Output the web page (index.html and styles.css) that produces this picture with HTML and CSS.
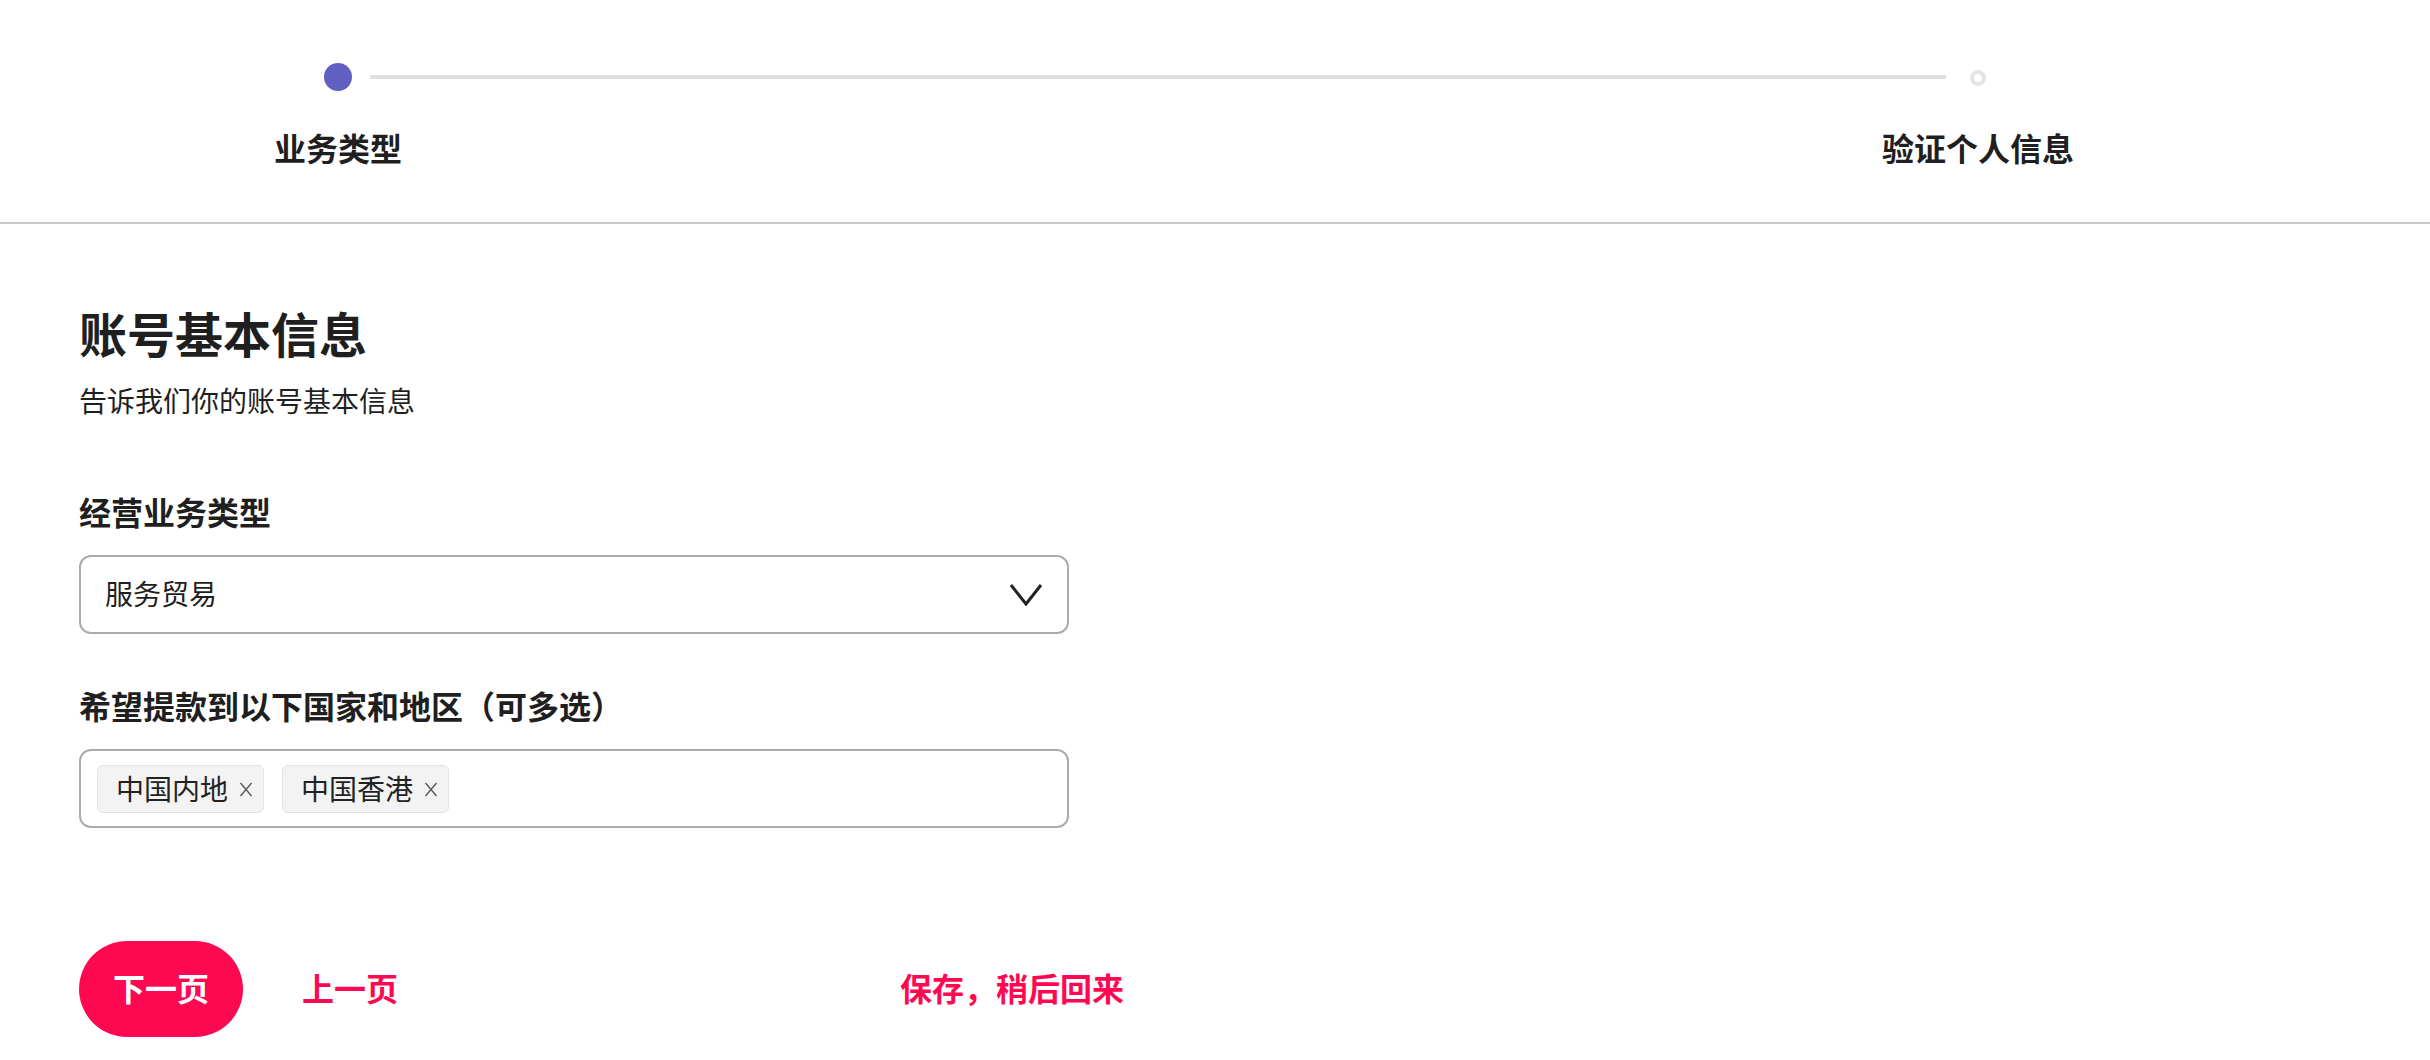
FILE: index.html
```html
<!DOCTYPE html>
<html lang="zh-CN">
<head>
<meta charset="utf-8">
<title>账号基本信息</title>
<link rel="stylesheet" href="styles.css">
</head>
<body>
<header class="stepper">
  <div class="track">
    <span class="dot-active"></span>
    <span class="track-line"></span>
    <span class="dot-idle"></span>
  </div>
  <div class="step-labels">
    <div class="step-label">业务类型</div>
    <div class="step-label">验证个人信息</div>
  </div>
</header>
<main class="content">
  <h1 class="title">账号基本信息</h1>
  <p class="subtitle">告诉我们你的账号基本信息</p>

  <div class="field">
    <div class="field-label">经营业务类型</div>
    <div class="select">
      <span class="select-value">服务贸易</span>
      <svg class="chevron" width="34" height="24" viewBox="0 0 34 24"><path d="M2 2 L17 21 L32 2" fill="none" stroke="#222" stroke-width="3"/></svg>
    </div>
  </div>

  <div class="field field-second">
    <div class="field-label">希望提款到以下国家和地区（可多选）</div>
    <div class="multi">
      <span class="tag">中国内地<svg class="tag-x" width="14" height="16" viewBox="0 0 14 16"><path d="M1.5 2 L12.5 15 M12.5 2 L1.5 15" stroke="#555" stroke-width="1.3"/></svg></span>
      <span class="tag">中国香港<svg class="tag-x" width="14" height="16" viewBox="0 0 14 16"><path d="M1.5 2 L12.5 15 M12.5 2 L1.5 15" stroke="#555" stroke-width="1.3"/></svg></span>
    </div>
  </div>

  <div class="actions">
    <button class="btn-next">下一页</button>
    <a class="link-prev">上一页</a>
    <a class="link-save">保存，稍后回来</a>
  </div>
</main>
</body>
</html>
```
FILE: styles.css
```css
html, body {
  margin: 0;
  padding: 0;
  background: #fff;
}
body {
  font-family: "Noto Sans CJK SC", "Noto Sans", sans-serif;
  color: #1f1f1f;
}
.stepper {
  padding-top: 63px;
  padding-bottom: 51px;
  border-bottom: 2px solid #c8c8c8;
}
.track {
  display: flex;
  align-items: center;
  height: 28px;
  margin-left: 324px;
  margin-right: 444px;
}
.dot-active {
  width: 28px;
  height: 28px;
  border-radius: 50%;
  background: #6060c2;
  flex: none;
}
.track-line {
  flex: 1;
  height: 4px;
  background: #dedede;
  margin: 0 24px 0 18px;
}
.dot-idle {
  width: 16px;
  height: 16px;
  box-sizing: border-box;
  border: 4px solid #e4e4e4;
  border-radius: 50%;
  flex: none;
  margin-top: 2px;
}
.step-labels {
  display: flex;
  justify-content: space-between;
  padding: 0 332px 0 218px;
  margin-top: 32px;
}
.step-label {
  width: 240px;
  text-align: center;
  font-size: 32px;
  line-height: 48px;
  font-weight: 700;
}
.content {
  padding: 76px 0 0 79px;
}
.title {
  margin: 0;
  font-size: 48px;
  line-height: 64px;
  font-weight: 700;
}
.subtitle {
  margin: 16px 0 0;
  font-size: 28px;
  line-height: 40px;
}
.field {
  width: 990px;
  margin-top: 67px;
}
.field-second {
  margin-top: 47px;
}
.field-label {
  font-size: 32px;
  line-height: 48px;
  font-weight: 700;
}
.select, .multi {
  box-sizing: border-box;
  height: 79px;
  margin-top: 20px;
  border: 2px solid #ababab;
  border-radius: 12px;
  display: flex;
  align-items: center;
}
.select {
  justify-content: space-between;
  padding: 0 24px 0 24px;
}
.select-value {
  font-size: 28px;
  line-height: 40px;
  padding-bottom: 4px;
}
.multi {
  padding: 0 16px;
  gap: 18px;
}
.tag {
  box-sizing: border-box;
  height: 48px;
  display: inline-flex;
  align-items: center;
  padding: 0 10px 2px 18px;
  background: #f3f3f3;
  border: 1px solid #e2e2e2;
  border-radius: 6px;
  font-size: 28px;
  color: #222;
}
.tag-x {
  margin-left: 11px;
  margin-top: 2px;
}
.actions {
  display: flex;
  align-items: center;
  margin-top: 113px;
}
.btn-next {
  width: 164px;
  height: 96px;
  border: none;
  border-radius: 48px;
  background: #ff0852;
  color: #fff;
  font-family: "Noto Sans CJK SC", sans-serif;
  font-size: 32px;
  font-weight: 700;
  padding: 0 0 5px;
}
.link-prev, .link-save {
  color: #ff0852;
  font-size: 32px;
  font-weight: 700;
  line-height: 48px;
  padding-bottom: 5px;
}
.link-prev {
  margin-left: 59px;
}
.link-save {
  margin-left: 502px;
}
```
